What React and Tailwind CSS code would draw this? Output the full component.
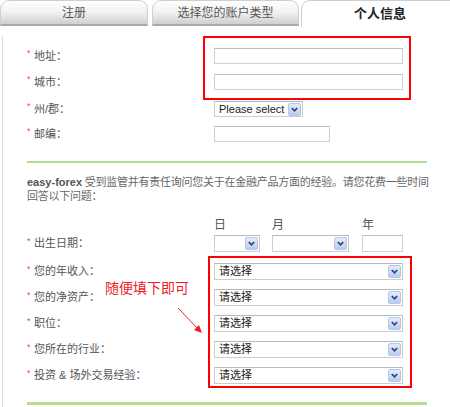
const FONT = "font-['Liberation_Sans','Noto_Sans_CJK_SC',sans-serif]";

function DropBtn() {
  return (
    <div className="w-[13px] h-[13px] rounded-[2px] border border-[#b3c7ea] bg-gradient-to-b from-[#e4ecfa] to-[#b9cdf0] flex items-center justify-center">
      <svg width="9" height="9" viewBox="0 0 9 9">
        <path d="M1.8 3 L4.5 5.8 L7.2 3" fill="none" stroke="#2c4373" strokeWidth="1.7" />
      </svg>
    </div>
  );
}

function Select({ w, h = 'h-[17px]', text }) {
  return (
    <div className={`${w} ${h} border border-[#cdcdcd] border-t-[#b9b9b9] bg-white flex items-center justify-between pl-[4px] pr-[1px]`}>
      <span className="text-[#222] text-[11px] leading-none">{text}</span>
      <DropBtn />
    </div>
  );
}

function TextInput({ w, h = 'h-[16px]' }) {
  return <div className={`${w} ${h} border border-[#d0d0d0] border-t-[#bdbdbd] bg-white`} />;
}

function Label({ children, h = 'h-[16px]', w }) {
  return (
    <div className={`${w || ''} ${h} flex items-center text-[#555] shrink-0`}>
      <span className="text-[#e8457a] text-[9px] w-[7px] -mt-[4px]">*</span>
      <span>{children}</span>
    </div>
  );
}

function Tab({ w, active, children }) {
  if (active) {
    return (
      <div className={`${w} h-[27px] shrink-0 rounded-t-[9px] border border-b-0 border-[#cfcfcf] bg-white flex items-center justify-center text-[13px] font-bold text-[#222]`}>
        {children}
      </div>
    );
  }
  return (
    <div className={`${w} h-[26px] shrink-0 rounded-t-[9px] border border-[#cfcfcf] border-b-[#a9a9a9] border-b-2 bg-gradient-to-b from-white via-[#f1f1f1] to-[#cfcfcf] flex items-center justify-center text-[12px] text-[#555]`}>
      {children}
    </div>
  );
}

export default function App() {
  return (
    <div className={`relative w-[450px] h-[407px] overflow-hidden bg-white text-[11px] ${FONT}`}>
      <div className="flex items-start w-[460px]">
        <Tab w="w-[148px]">注册</Tab>
        <div className="w-[4px] shrink-0" />
        <Tab w="w-[147px]">选择您的账户类型</Tab>
        <div className="w-[2px] shrink-0" />
        <Tab w="w-[158px]" active>个人信息</Tab>
      </div>

      <div className="ml-[2px] border-l border-[#dadada] pl-[24px] h-[380px]">
        {/* address + city */}
        <div className="flex mt-[9px]">
          <div className="w-[176px] pt-[12px] flex flex-col gap-[10px]">
            <Label>地址：</Label>
            <Label>城市：</Label>
          </div>
          <div className="w-[208px] border-2 border-[#ff0000] pt-[10px] pb-[8px] pl-[9px] flex flex-col gap-[10px]">
            <TextInput w="w-[189px]" />
            <TextInput w="w-[189px]" />
          </div>
        </div>

        <div className="flex items-center mt-[1px]">
          <Label w="w-[187px]">州/郡：</Label>
          <Select w="w-[89px]" h="h-[16px]" text="Please select" />
        </div>

        <div className="flex items-center mt-[9px]">
          <Label w="w-[187px]">邮编：</Label>
          <TextInput w="w-[116px]" />
        </div>

        <div className="mt-[19px] h-[2px] w-[400px] bg-[#b6de90]" />

        <p className="mt-[12px] leading-[14px] text-[#666] w-[400px] whitespace-nowrap tracking-[-0.25px]">
          <span className="font-bold text-[#555] tracking-normal">easy-forex</span> 受到监管并有责任询问您关于在金融产品方面的经验。请您花费一些时间
          <br />
          回答以下问题：
        </p>

        <div className="flex mt-[15px] h-[14px] items-center text-[#555] text-[12px]">
          <div className="w-[187px]" />
          <span className="w-[58px]">日</span>
          <span className="w-[90px]">月</span>
          <span>年</span>
        </div>

        <div className="flex items-center mt-[3px]">
          <Label w="w-[187px]" h="h-[17px]">出生日期：</Label>
          <Select w="w-[46px]" text="" />
          <div className="w-[12px]" />
          <Select w="w-[77px]" text="" />
          <div className="w-[13px]" />
          <TextInput w="w-[41px]" h="h-[17px]" />
        </div>

        {/* questionnaire */}
        <div className="flex mt-[4px]">
          <div className="w-[181px] pt-[7px] flex flex-col gap-[9px]">
            <Label h="h-[17px]">您的年收入：</Label>
            <Label h="h-[17px]">您的净资产：</Label>
            <Label h="h-[17px]">职位：</Label>
            <Label h="h-[17px]">您所在的行业：</Label>
            <Label h="h-[17px]">投资 &amp; 场外交易经验：</Label>
          </div>
          <div className="w-[204px] border-2 border-[#ff0000] pt-[5px] pb-[2px] pl-[4px] flex flex-col gap-[9px]">
            {[0, 1, 2, 3, 4].map((i) => (
              <Select key={i} w="w-[189px]" text="请选择" />
            ))}
          </div>
        </div>

        <div className="mt-[14px] h-[3px] w-[400px] bg-[#b6de90]" />
      </div>

      {/* annotation */}
      <div className="absolute left-[105px] top-[279px] text-[14px] leading-[18px] text-[#ee1c24]">随便填下即可</div>
      <svg className="absolute left-[175px] top-[305px]" width="32" height="32" viewBox="0 0 32 32">
        <path d="M3 3 L25 26" stroke="#ee1c24" strokeWidth="1" />
        <path d="M27 28 L19 25 L24 20 Z" fill="#ee1c24" />
      </svg>
    </div>
  );
}
